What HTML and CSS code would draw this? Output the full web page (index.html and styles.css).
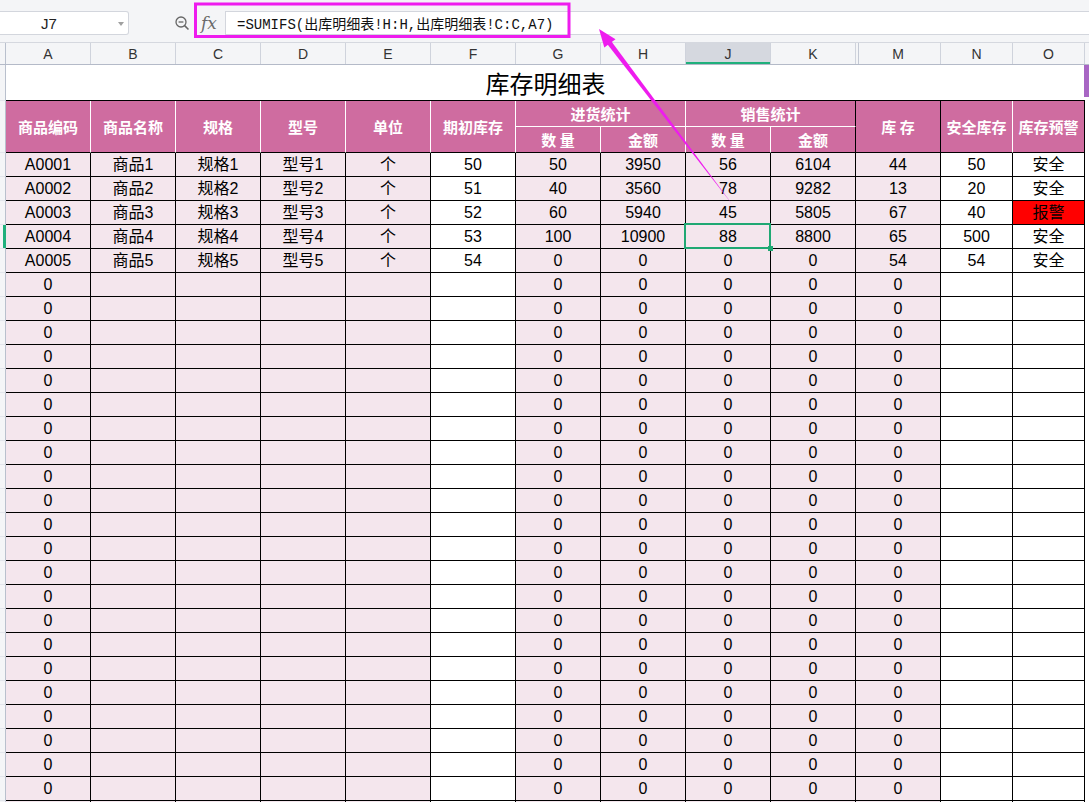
FILE: index.html
```html
<!DOCTYPE html>
<html lang="zh-CN">
<head>
<meta charset="utf-8">
<title>库存明细表</title>
<link rel="stylesheet" href="styles.css">
</head>
<body>
<div class="topbar">
  <div class="namebox">J7<span class="dd"></span></div>
  <div class="tools">
    <svg class="zoomic" width="15" height="15" viewBox="0 0 15 15"><circle cx="6" cy="6" r="5" fill="none" stroke="#666" stroke-width="1.3"/><line x1="3.6" y1="6" x2="8.4" y2="6" stroke="#666" stroke-width="1.3"/><line x1="9.6" y1="9.6" x2="13.5" y2="13.5" stroke="#666" stroke-width="1.5"/></svg>
    <span class="fx">fx</span>
  </div>
  <div class="formula">=SUMIFS(出库明细表!H:H,出库明细表!C:C,A7)</div>
</div>

<div class="colhead">
  <div class="ch rhc"></div>
  <div class="ch">A</div><div class="ch">B</div><div class="ch">C</div><div class="ch">D</div><div class="ch">E</div><div class="ch">F</div><div class="ch">G</div><div class="ch">H</div><div class="ch sel">J</div><div class="ch">K</div><div class="ch hid">M</div><div class="ch">N</div><div class="ch">O</div>
  <div class="ch end"></div>
</div>

<div class="main">
<div class="sheet">
  <div class="rh"></div><div class="title">库存明细表</div>

  <div class="rh r2"></div>
  <div class="hd r2">商品编码</div>
  <div class="hd r2">商品名称</div>
  <div class="hd r2">规格</div>
  <div class="hd r2">型号</div>
  <div class="hd r2">单位</div>
  <div class="hd r2">期初库存</div>
  <div class="hd g">进货统计</div>
  <div class="hd g bk">销售统计</div>
  <div class="hd r2 bk">库 存</div>
  <div class="hd r2">安全库存</div>
  <div class="hd r2 bk">库存预警</div>
  <div class="hd">数 量</div>
  <div class="hd">金额</div>
  <div class="hd">数 量</div>
  <div class="hd bk">金额</div>

  <div class="rh"></div><div>A0001</div><div>商品1</div><div>规格1</div><div>型号1</div><div>个</div><div class="w">50</div><div>50</div><div>3950</div><div>56</div><div>6104</div><div>44</div><div class="w">50</div><div class="w">安全</div>
  <div class="rh"></div><div>A0002</div><div>商品2</div><div>规格2</div><div>型号2</div><div>个</div><div class="w">51</div><div>40</div><div>3560</div><div>78</div><div>9282</div><div>13</div><div class="w">20</div><div class="w">安全</div>
  <div class="rh"></div><div>A0003</div><div>商品3</div><div>规格3</div><div>型号3</div><div>个</div><div class="w">52</div><div>60</div><div>5940</div><div>45</div><div>5805</div><div>67</div><div class="w">40</div><div class="alarm">报警</div>
  <div class="rh act"></div><div>A0004</div><div>商品4</div><div>规格4</div><div>型号4</div><div>个</div><div class="w">53</div><div>100</div><div>10900</div><div class="cur">88</div><div>8800</div><div>65</div><div class="w">500</div><div class="w">安全</div>
  <div class="rh"></div><div>A0005</div><div>商品5</div><div>规格5</div><div>型号5</div><div>个</div><div class="w">54</div><div>0</div><div>0</div><div>0</div><div>0</div><div>54</div><div class="w">54</div><div class="w">安全</div>

  <div class="rh"></div><div>0</div><div></div><div></div><div></div><div></div><div class="w"></div><div>0</div><div>0</div><div>0</div><div>0</div><div>0</div><div class="w"></div><div class="w"></div>
  <div class="rh"></div><div>0</div><div></div><div></div><div></div><div></div><div class="w"></div><div>0</div><div>0</div><div>0</div><div>0</div><div>0</div><div class="w"></div><div class="w"></div>
  <div class="rh"></div><div>0</div><div></div><div></div><div></div><div></div><div class="w"></div><div>0</div><div>0</div><div>0</div><div>0</div><div>0</div><div class="w"></div><div class="w"></div>
  <div class="rh"></div><div>0</div><div></div><div></div><div></div><div></div><div class="w"></div><div>0</div><div>0</div><div>0</div><div>0</div><div>0</div><div class="w"></div><div class="w"></div>
  <div class="rh"></div><div>0</div><div></div><div></div><div></div><div></div><div class="w"></div><div>0</div><div>0</div><div>0</div><div>0</div><div>0</div><div class="w"></div><div class="w"></div>
  <div class="rh"></div><div>0</div><div></div><div></div><div></div><div></div><div class="w"></div><div>0</div><div>0</div><div>0</div><div>0</div><div>0</div><div class="w"></div><div class="w"></div>
  <div class="rh"></div><div>0</div><div></div><div></div><div></div><div></div><div class="w"></div><div>0</div><div>0</div><div>0</div><div>0</div><div>0</div><div class="w"></div><div class="w"></div>
  <div class="rh"></div><div>0</div><div></div><div></div><div></div><div></div><div class="w"></div><div>0</div><div>0</div><div>0</div><div>0</div><div>0</div><div class="w"></div><div class="w"></div>
  <div class="rh"></div><div>0</div><div></div><div></div><div></div><div></div><div class="w"></div><div>0</div><div>0</div><div>0</div><div>0</div><div>0</div><div class="w"></div><div class="w"></div>
  <div class="rh"></div><div>0</div><div></div><div></div><div></div><div></div><div class="w"></div><div>0</div><div>0</div><div>0</div><div>0</div><div>0</div><div class="w"></div><div class="w"></div>
  <div class="rh"></div><div>0</div><div></div><div></div><div></div><div></div><div class="w"></div><div>0</div><div>0</div><div>0</div><div>0</div><div>0</div><div class="w"></div><div class="w"></div>
  <div class="rh"></div><div>0</div><div></div><div></div><div></div><div></div><div class="w"></div><div>0</div><div>0</div><div>0</div><div>0</div><div>0</div><div class="w"></div><div class="w"></div>
  <div class="rh"></div><div>0</div><div></div><div></div><div></div><div></div><div class="w"></div><div>0</div><div>0</div><div>0</div><div>0</div><div>0</div><div class="w"></div><div class="w"></div>
  <div class="rh"></div><div>0</div><div></div><div></div><div></div><div></div><div class="w"></div><div>0</div><div>0</div><div>0</div><div>0</div><div>0</div><div class="w"></div><div class="w"></div>
  <div class="rh"></div><div>0</div><div></div><div></div><div></div><div></div><div class="w"></div><div>0</div><div>0</div><div>0</div><div>0</div><div>0</div><div class="w"></div><div class="w"></div>
  <div class="rh"></div><div>0</div><div></div><div></div><div></div><div></div><div class="w"></div><div>0</div><div>0</div><div>0</div><div>0</div><div>0</div><div class="w"></div><div class="w"></div>
  <div class="rh"></div><div>0</div><div></div><div></div><div></div><div></div><div class="w"></div><div>0</div><div>0</div><div>0</div><div>0</div><div>0</div><div class="w"></div><div class="w"></div>
  <div class="rh"></div><div>0</div><div></div><div></div><div></div><div></div><div class="w"></div><div>0</div><div>0</div><div>0</div><div>0</div><div>0</div><div class="w"></div><div class="w"></div>
  <div class="rh"></div><div>0</div><div></div><div></div><div></div><div></div><div class="w"></div><div>0</div><div>0</div><div>0</div><div>0</div><div>0</div><div class="w"></div><div class="w"></div>
  <div class="rh"></div><div>0</div><div></div><div></div><div></div><div></div><div class="w"></div><div>0</div><div>0</div><div>0</div><div>0</div><div>0</div><div class="w"></div><div class="w"></div>
  <div class="rh"></div><div>0</div><div></div><div></div><div></div><div></div><div class="w"></div><div>0</div><div>0</div><div>0</div><div>0</div><div>0</div><div class="w"></div><div class="w"></div>
  <div class="rh"></div><div>0</div><div></div><div></div><div></div><div></div><div class="w"></div><div>0</div><div>0</div><div>0</div><div>0</div><div>0</div><div class="w"></div><div class="w"></div>
  <div class="rh"></div><div></div><div></div><div></div><div></div><div></div><div class="w"></div><div></div><div></div><div></div><div></div><div></div><div class="w"></div><div class="w"></div>
</div>
<div class="rstrip"><div class="thumb"></div></div>
</div>

<svg class="annot" width="1089" height="802" viewBox="0 0 1089 802">
  <rect x="195.5" y="4" width="373.5" height="32.5" fill="none" stroke="#ee1cee" stroke-width="3"/>
  <polygon points="733.5,206 606,42.5 610,39.5" fill="#ee1cee"/>
  <polygon points="599,29 615.5,39.2 604.3,47.6" fill="#ee1cee"/>
</svg>
</body>
</html>
```

FILE: styles.css
```css
* { box-sizing: border-box; }

body {
  margin: 0;
  width: 1089px;
  height: 802px;
  overflow: hidden;
  background: #fff;
  position: relative;
  font-family: "Liberation Sans", "Noto Sans CJK SC", sans-serif;
  color: #000;
}

/* ---------- formula bar ---------- */
.topbar {
  height: 43px;
  background: #f4f5f7;
  border-bottom: 1px solid #d5d8df;
  display: flex;
  align-items: flex-start;
  padding-top: 11px;
}

.namebox {
  width: 129px;
  height: 24px;
  background: #fff;
  border: 1px solid #d3d6dd;
  border-left: none;
  border-radius: 0 3px 3px 0;
  display: flex;
  align-items: center;
  justify-content: center;
  position: relative;
  font-size: 15px;
  color: #222;
  padding-right: 30px;
}

.namebox .dd {
  position: absolute;
  right: 4px;
  top: 10px;
  border-left: 3.5px solid transparent;
  border-right: 3.5px solid transparent;
  border-top: 4px solid #a0a0a0;
}

.tools {
  width: 96px;
  height: 24px;
  display: flex;
  align-items: center;
  padding-left: 46px;
}

.zoomic { display: block; margin-top: 1px; }

.fx {
  margin-left: 11px;
  font-family: "DejaVu Serif", "Liberation Serif", serif;
  font-style: italic;
  font-size: 17px;
  color: #6a6a6a;
  line-height: 1;
}

.formula {
  flex: 1;
  height: 24px;
  background: #fff;
  border: 1px solid #d3d6dd;
  border-right: none;
  display: flex;
  align-items: center;
  padding-left: 11px;
  font-family: "Liberation Mono", "Noto Sans CJK SC", monospace;
  font-size: 14px;
  color: #111;
  white-space: nowrap;
}

/* ---------- column letters ---------- */
.colhead {
  display: grid;
  grid-template-columns: 6px repeat(11, 85px) 72px 72px 4px;
  height: 22px;
  background: #f4f5f7;
  border-bottom: 1px solid #b4bac8;
}

.ch {
  border-right: 1px solid #cfd3dc;
  display: flex;
  align-items: center;
  justify-content: center;
  font-size: 14px;
  color: #333;
}

.ch.rhc { border-right-color: #b9c0cd; }
.ch.end { border-right: none; }
.ch.sel {
  background: #d5d8df;
  box-shadow: inset 0 -2px 0 #1fb07c;
}
.ch.hid {
  background-image: linear-gradient(to right, transparent 2px, #c4c9d4 2px, #c4c9d4 3px, transparent 3px);
}

/* ---------- sheet ---------- */
.main {
  display: flex;
}

.rstrip {
  width: 4px;
}

.thumb {
  height: 32px;
  margin-left: -1px;
  width: 5px;
  background: #a866c4;
}

.sheet {
  display: grid;
  grid-template-columns: 6px repeat(11, 85px) 72px 72px;
  grid-template-rows: 36px 26px 26px;
  grid-auto-rows: 24px;
  width: 1085px;
}

.sheet > div {
  border-right: 1px solid #000;
  border-bottom: 1px solid #000;
  background: #f4e6ed;
  display: flex;
  align-items: center;
  justify-content: center;
  font-size: 16px;
  line-height: 1;
  white-space: nowrap;
}

.sheet > .w { background: #fff; }
.sheet > .alarm { background: #ff0000; }

.sheet > .rh {
  background: #f4f5f7;
  border-right: 1px solid #b9c0cd;
  border-bottom: 1px solid #e2e5eb;
}
.sheet > .rh.r2 { grid-row: span 2; }
.sheet > .rh.act { box-shadow: inset -2px 0 0 #1fb07c; border-right-color: #1fb07c; }

.sheet > .title {
  grid-column: 2 / -1;
  background: #fff;
  border-right: none;
  font-size: 24px;
  font-family: "Noto Sans CJK SC", sans-serif;
  padding-top: 1px;
}

.sheet > .hd {
  background: #cf6ca0;
  color: #fff;
  font-weight: bold;
  font-size: 15px;
  font-family: "Noto Sans CJK SC", sans-serif;
  border-right-color: #fff;
}
.sheet > .hd.r2 { grid-row: span 2; }
.sheet > .hd.g { grid-column: span 2; border-bottom-color: #fff; }
.sheet > .hd.bk { border-right-color: #000; }

.sheet > .cur { position: relative; }
.sheet > .cur::after {
  content: "";
  position: absolute;
  left: -2px;
  top: -2px;
  right: -1px;
  bottom: -1px;
  border: 2px solid #1fa873;
}
.sheet > .cur::before {
  content: "";
  position: absolute;
  right: -3px;
  bottom: -3px;
  width: 5px;
  height: 5px;
  background: #1fa873;
  z-index: 1;
}

/* ---------- annotation ---------- */
.annot {
  position: absolute;
  left: 0;
  top: 0;
  pointer-events: none;
}
```
